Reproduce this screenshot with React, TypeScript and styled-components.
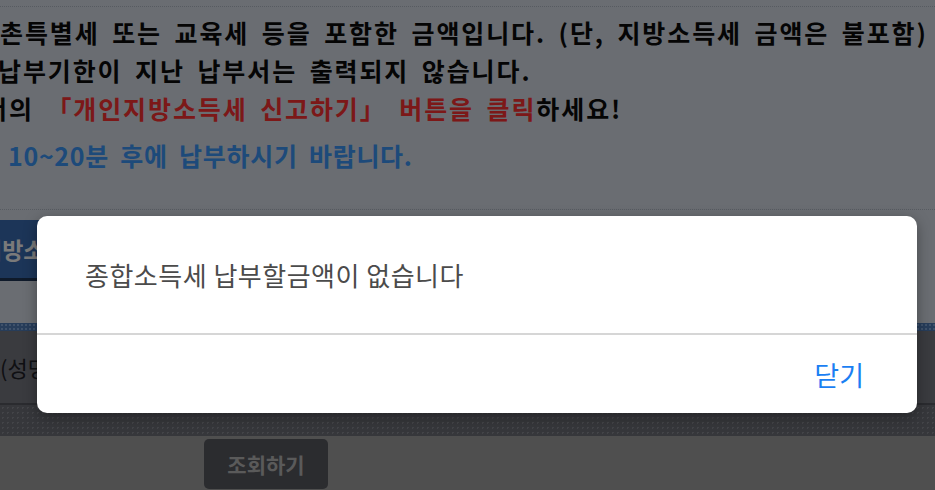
import styled, { createGlobalStyle } from 'styled-components';

const GlobalStyle = createGlobalStyle`
  html, body {
    margin: 0;
    padding: 0;
  }
  body {
    background: #9e9e9e;
    font-family: "Noto Sans CJK KR", "Noto Sans", sans-serif;
  }
`;

const Page = styled.div`
  position: relative;
  width: 935px;
  height: 490px;
  overflow: hidden;
  display: flex;
  flex-direction: column;
`;

const Upper = styled.div`
  background: #d4dae4;
  height: 436px;
  display: flex;
  flex-direction: column;
  flex-shrink: 0;
`;

const DottedRule = styled.div<{ $top: number }>`
  margin-top: ${(p) => p.$top}px;
  border-top: 1px dotted #aeb6c2;
`;

const Notice = styled.div`
  margin-top: 6px;
  font-weight: 700;
  font-size: 25px;
  letter-spacing: 1.9px;
  word-spacing: 5px;
  white-space: nowrap;
  color: #0a0a0a;
`;

const NoticeLine = styled.div<{ $gap?: number; $indent?: number; $color?: string; $tight?: boolean }>`
  height: 38px;
  line-height: 38px;
  margin-top: ${(p) => p.$gap ?? 0}px;
  text-indent: ${(p) => p.$indent ?? 0}px;
  color: ${(p) => p.$color ?? 'inherit'};
  letter-spacing: ${(p) => (p.$tight ? '0.7px' : 'inherit')};
`;

const Red = styled.span`
  color: #f83030;
`;

const Band = styled.div`
  margin-top: 10px;
  height: 58px;
  width: 900px;
  background: #386ab0;
  border-bottom: 3px solid #1f3454;
  display: flex;
  align-items: center;
  font-family: "Liberation Serif", "Noto Sans CJK KR", serif;
  font-weight: 700;
  font-size: 23px;
  color: #f4f4f4;
  white-space: nowrap;
  text-indent: -19px;
`;

const Gap = styled.div`
  height: 42px;
`;

const BlueStrip = styled.div`
  height: 8px;
  background-color: #4f7bb4;
  background-image: radial-gradient(#7ea4d6 1px, transparent 1px);
  background-size: 4px 4px;
`;

const TableRow = styled.div`
  height: 72px;
  background: #74767f;
  border-bottom: 2px solid #55575e;
  display: flex;
  align-items: center;
  font-size: 22px;
  color: #1e2026;
  white-space: nowrap;
`;

const TableFoot = styled.div`
  flex: 1;
  background-color: #6c6e76;
  background-image: radial-gradient(#868890 1px, transparent 1px);
  background-size: 5px 5px;
`;

const Lower = styled.div`
  flex: 1;
  background: #9e9e9e;
  padding: 3px 0 0 204px;
`;

const SearchButton = styled.button`
  width: 124px;
  height: 50px;
  border: 0;
  border-radius: 5px;
  background: #56585f;
  color: #b4b4b4;
  font-family: "Noto Sans CJK KR", sans-serif;
  font-weight: 700;
  font-size: 21px;
  padding: 0;
`;

const Dim = styled.div`
  position: absolute;
  inset: 0;
  background: rgba(0, 0, 0, 0.5);
`;

const Dialog = styled.div`
  position: absolute;
  left: 37px;
  top: 216px;
  width: 880px;
  height: 197px;
  background: #ffffff;
  border-radius: 10px;
  box-shadow: 0 4px 14px rgba(0, 0, 0, 0.35);
  display: flex;
  flex-direction: column;
  overflow: hidden;
`;

const DialogBody = styled.div`
  height: 117px;
  display: flex;
  align-items: center;
  padding-left: 48px;
  font-size: 26px;
  letter-spacing: 0.5px;
  color: #4b4b4b;
  border-bottom: 2px solid #d6d6d6;
`;

const DialogFoot = styled.div`
  flex: 1;
  display: flex;
  align-items: center;
  justify-content: flex-end;
  padding-right: 53px;
`;

const CloseButton = styled.button`
  border: 0;
  background: none;
  padding: 0;
  font-family: "Noto Sans CJK KR", sans-serif;
  font-size: 27px;
  color: #1b7ff3;
`;

export default function App() {
  return (
    <>
      <GlobalStyle />
      <Page>
        <Upper>
          <DottedRule $top={6} />
          <Notice>
            <NoticeLine>촌특별세 또는 교육세 등을 포함한 금액입니다. (단, 지방소득세 금액은 불포함)</NoticeLine>
            <NoticeLine $indent={-2}>납부기한이 지난 납부서는 출력되지 않습니다.</NoticeLine>
            <NoticeLine $indent={-16}>
              서의 <Red>「개인지방소득세 신고하기」 버튼을 클릭</Red>하세요!
            </NoticeLine>
            <NoticeLine $gap={9} $indent={8} $color="#3a94f4" $tight>
              10~20분 후에 납부하시기 바랍니다.
            </NoticeLine>
          </Notice>
          <DottedRule $top={35} />
          <Band>지방소득세 납부서 출력</Band>
          <Gap />
          <BlueStrip />
          <TableRow>(성명</TableRow>
          <TableFoot />
        </Upper>
        <Lower>
          <SearchButton>조회하기</SearchButton>
        </Lower>
        <Dim />
        <Dialog>
          <DialogBody>종합소득세 납부할금액이 없습니다</DialogBody>
          <DialogFoot>
            <CloseButton>닫기</CloseButton>
          </DialogFoot>
        </Dialog>
      </Page>
    </>
  );
}
